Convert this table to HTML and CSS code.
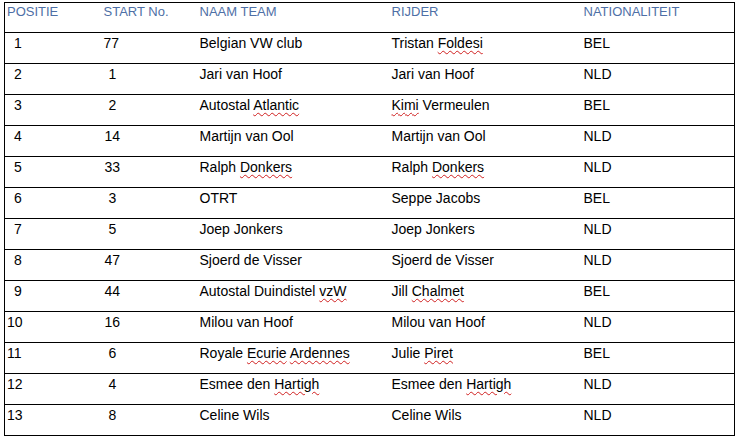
FILE: index.html
```html
<!DOCTYPE html>
<html>
<head>
<meta charset="utf-8">
<link rel="stylesheet" href="styles.css">
</head>
<body>
<table class="grid">
  <colgroup>
    <col class="c-pos"><col class="c-nr"><col class="c-team"><col class="c-rider"><col class="c-nat">
  </colgroup>
  <thead>
    <tr><th>POSITIE</th><th>START No.</th><th>NAAM TEAM</th><th>RIJDER</th><th>NATIONALITEIT</th></tr>
  </thead>
  <tbody>
    <tr><td class="p1">1</td><td>77</td><td>Belgian VW club</td><td>Tristan <span class="sp">Foldesi</span></td><td>BEL</td></tr>
    <tr><td class="p1">2</td><td class="n1">1</td><td>Jari van Hoof</td><td>Jari van Hoof</td><td>NLD</td></tr>
    <tr><td class="p1">3</td><td class="n1">2</td><td>Autostal <span class="sp">Atlantic</span></td><td><span class="sp">Kimi</span> Vermeulen</td><td>BEL</td></tr>
    <tr><td class="p1">4</td><td class="n2">14</td><td>Martijn van Ool</td><td>Martijn van Ool</td><td>NLD</td></tr>
    <tr><td class="p1">5</td><td class="n2">33</td><td>Ralph <span class="sp">Donkers</span></td><td>Ralph <span class="sp">Donkers</span></td><td>NLD</td></tr>
    <tr><td class="p1">6</td><td class="n1">3</td><td>OTRT</td><td>Seppe Jacobs</td><td>BEL</td></tr>
    <tr><td class="p1">7</td><td class="n1">5</td><td>Joep Jonkers</td><td>Joep Jonkers</td><td>NLD</td></tr>
    <tr><td class="p1">8</td><td class="n2">47</td><td>Sjoerd de Visser</td><td>Sjoerd de Visser</td><td>NLD</td></tr>
    <tr><td class="p1">9</td><td class="n2">44</td><td>Autostal Duindistel <span class="sp">vzW</span></td><td>Jill <span class="sp">Chalmet</span></td><td>BEL</td></tr>
    <tr><td>10</td><td class="n2">16</td><td>Milou van Hoof</td><td>Milou van Hoof</td><td>NLD</td></tr>
    <tr><td>11</td><td class="n1">6</td><td>Royale <span class="sp">Ecurie</span> <span class="sp">Ardennes</span></td><td>Julie <span class="sp">Piret</span></td><td>BEL</td></tr>
    <tr><td>12</td><td class="n1">4</td><td>Esmee den <span class="sp">Hartigh</span></td><td>Esmee den <span class="sp">Hartigh</span></td><td>NLD</td></tr>
    <tr><td>13</td><td class="n1">8</td><td>Celine Wils</td><td>Celine Wils</td><td>NLD</td></tr>
  </tbody>
</table>
</body>
</html>
```
FILE: styles.css
```css
html, body {
  margin: 0;
  padding: 0;
  background: #ffffff;
}
body {
  font-family: "Liberation Sans", Arial, sans-serif;
  color: #000000;
}
.grid {
  margin: 2px 0 0 4px;
  width: 731px;
  border-collapse: collapse;
  table-layout: fixed;
  border-left: 1px solid #000;
  border-right: 1px solid #000;
  border-bottom: 1px solid #000;
}
.c-pos { width: 97px; }
.c-nr { width: 96px; }
.c-team { width: 192px; }
.c-rider { width: 192px; }
.c-nat { width: auto; }
.grid th {
  font-weight: normal;
  font-size: 13px;
  color: #4e6fa6;
  text-align: left;
  vertical-align: top;
  height: 30px;
  padding: 1px 0 0 2px;
  box-sizing: border-box;
  border-top: 1px solid #000;
  border-bottom: 1px solid #000;
}
.grid td {
  font-size: 14px;
  text-align: left;
  vertical-align: top;
  height: 31px;
  padding: 2px 0 0 2px;
  box-sizing: border-box;
  border-bottom: 1px solid #000;
  white-space: nowrap;
}
.grid td.p1 { padding-left: 9px; }
.grid td.n1 { padding-left: 7px; }
.grid td.n2 { padding-left: 3px; }
.sp {
  text-decoration: underline wavy #d02020;
  text-decoration-thickness: 1px;
  text-underline-offset: 2px;
}
```
